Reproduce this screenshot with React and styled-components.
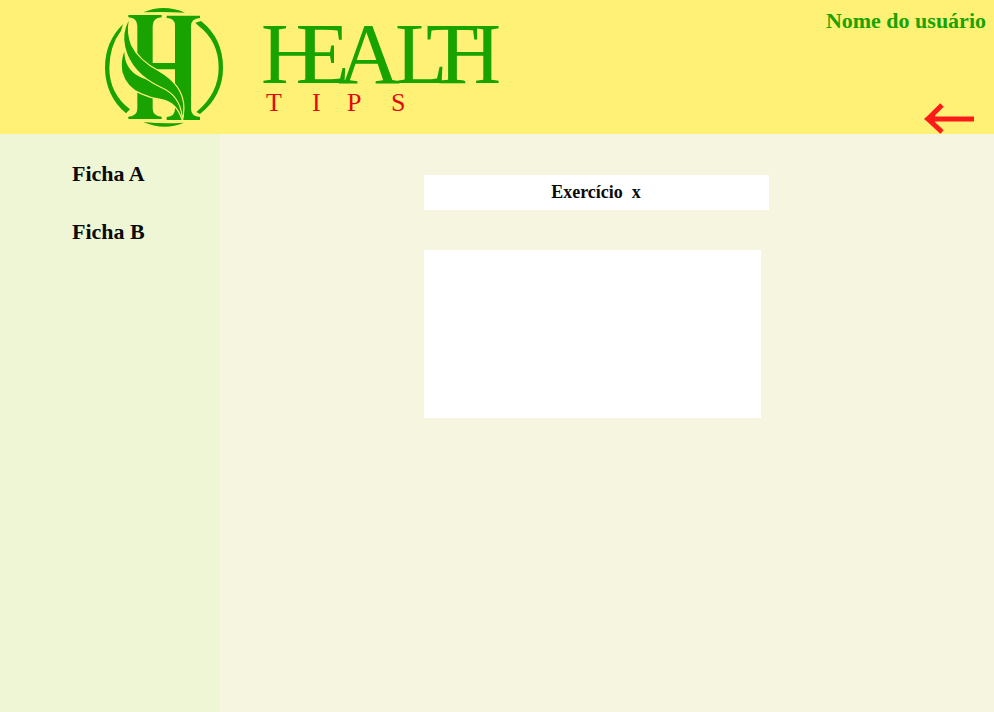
import React from "react";
import styled, { createGlobalStyle } from "styled-components";

const GlobalStyle = createGlobalStyle`
  * { box-sizing: border-box; }
  body { margin: 0; font-family: "Liberation Serif", serif; background: #f6f5e0; }
`;

const Page = styled.div`
  min-height: 100vh;
  display: flex;
  flex-direction: column;
`;

const Header = styled.header`
  display: flex;
  justify-content: space-between;
  background: #fff176;
  padding-left: 95px;
`;

const Brand = styled.a`
  display: flex;
  gap: 16px;
`;

const Account = styled.div`
  display: flex;
  flex-direction: column;
  align-items: flex-end;
  justify-content: space-between;
  padding-top: 8px;
`;

const UserName = styled.span`
  padding-right: 8px;
  font-size: 22px;
  line-height: 26px;
  font-weight: 700;
  color: #18a300;
`;

const BackButton = styled.button`
  display: flex;
  margin-right: 20px;
  padding: 0;
  border: 0;
  background: transparent;
  cursor: pointer;
`;

const Body = styled.div`
  flex: 1;
  display: flex;
`;

const Sidebar = styled.nav`
  flex: 0 0 220px;
  display: flex;
  flex-direction: column;
  gap: 32px;
  padding: 27px 16px 27px 72px;
  background: #eff6d5;
`;

const SheetLink = styled.a`
  font-size: 22px;
  line-height: 26px;
  font-weight: 700;
  color: #0a0a0a;
  text-decoration: none;
`;

const Content = styled.main`
  flex: 1;
  display: flex;
  flex-direction: column;
  align-items: center;
  gap: 40px;
  padding: 41px 46px 41px 24px;
`;

const Title = styled.h1`
  width: 100%;
  max-width: 345px;
  margin: 0;
  padding: 5px 0;
  background: #fff;
  color: #0a0a0a;
  font-size: 18px;
  line-height: 25px;
  font-weight: 700;
  text-align: center;
  white-space: pre;
`;

const Panel = styled.section`
  width: 100%;
  max-width: 345px;
  padding-right: 8px;
`;

const Sheet = styled.div`
  min-height: 168px;
  background: #fff;
`;

function Emblem() {
  return (
    <svg width="140" height="134" viewBox="0 0 420 402" fill="#18a300" aria-hidden="true">
      <path d="M84 73Q30 125 30 203Q31 287 93 340L105 328Q43 280 43 203Q44 137 78 92Z" />
      <path d="M301 68L318 63Q384 115 384 203Q384 287 315 342L304 336Q371 280 371 203Q371 124 311 78Z" />
      <path d="M145 37Q207 11 270 38Q207 35 145 37ZM145 366Q207 372 267 368Q207 393 145 366Z" />
      <path d="M100 45H200V52Q173 54 173 78V189H240V78Q240 54 215 54V47H315V54Q288 56 288 78V326Q288 349 315 351V360H215V351Q240 349 240 326V208H173V326Q173 348 200 350V357H100V350Q127 348 127 326V78Q127 54 100 52Z" />
      <g stroke="#fff176" strokeWidth="7" paintOrder="stroke" strokeLinejoin="round">
        <path d="M80 130L135 204L178 232L210 275L140 278Q95 262 82 215Z" fill="#fff176" stroke="none" />
        <path d="M88 155Q89 205 130 228Q150 240 190 246Q240 262 256 310Q262 330 262 357Q247 307 200 297Q170 294 140 280Q95 262 82 215Q77 180 88 155Z" />
        <path d="M101 62Q94 100 108 136Q130 182 190 214Q265 257 265 325L263 350Q257 285 198 260Q110 220 91 142Q81 99 101 62Z" />
      </g>
    </svg>
  );
}

/* The H/E and T/H pairs share one stem, so each letter has its own x. */
function Wordmark() {
  return (
    <svg width="260" height="134" viewBox="0 0 260 134" fontFamily="Liberation Serif, serif">
      <text x="10 46 87 144 175 188" y="83" fontSize="86" fill="#18a300">HEALTH</text>
      <text x="15 61 96 140" y="111" fontSize="26" fill="#df0b0b">TIPS</text>
    </svg>
  );
}

function ArrowLeft() {
  return (
    <svg width="50" height="31" viewBox="0 0 50 31" fill="none" stroke="#ff1a1a" strokeWidth="5" aria-hidden="true">
      <path d="M50 16H5M18 2L4 16L18 29" />
      <path d="M0 16L11 8V23Z" fill="#ff1a1a" stroke="none" />
    </svg>
  );
}

const sheets = [
  { id: "a", label: "Ficha A" },
  { id: "b", label: "Ficha B" },
];

export default function App() {
  return (
    <Page>
      <GlobalStyle />
      <Header>
        <Brand href="#" aria-label="Health Tips">
          <Emblem />
          <Wordmark />
        </Brand>
        <Account>
          <UserName>Nome do usuário</UserName>
          <BackButton type="button" aria-label="Voltar">
            <ArrowLeft />
          </BackButton>
        </Account>
      </Header>
      <Body>
        <Sidebar>
          {sheets.map((s) => (
            <SheetLink key={s.id} href={`#${s.id}`}>{s.label}</SheetLink>
          ))}
        </Sidebar>
        <Content>
          <Title>{"Exercício  x"}</Title>
          <Panel>
            <Sheet />
          </Panel>
        </Content>
      </Body>
    </Page>
  );
}
